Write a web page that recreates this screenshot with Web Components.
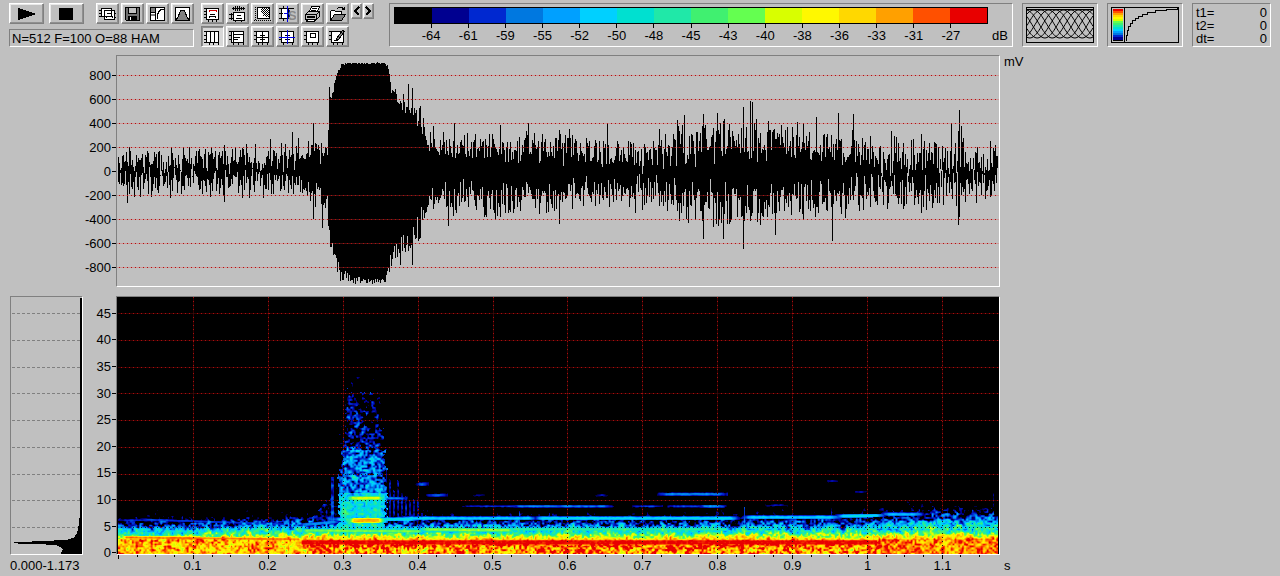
<!DOCTYPE html>
<html lang="en">
<head>
<meta charset="utf-8">
<title>Sound Analyzer</title>
<style>
    html, body {
        height: 100%;
        margin: 0;
    }
    body {
        background: #c0c0c0;
        color: #000;
        font: 13px/13px "Liberation Sans", Arial, sans-serif;
    }
</style>
</head>
<body>
<sound-analyzer></sound-analyzer>

<script>
// level colours, quiet to loud
const PALETTE = [
    [0, 0, 0], [0, 0, 144], [0, 40, 208], [0, 120, 224],
    [0, 160, 255], [0, 208, 255], [0, 224, 208], [32, 232, 168],
    [64, 240, 112], [100, 255, 80], [216, 255, 0], [255, 248, 0],
    [255, 216, 0], [255, 160, 0], [255, 80, 0], [232, 0, 0]
];

const DB = [-64, -61, -59, -55, -52, -50, -48, -45, -43, -40, -38, -36, -33, -31, -27];

const rgb = (c) => `rgb(${c.join(',')})`;

const ICONS = {
    play: '<path fill="#000" stroke="none" d="M0 2v12h2v-1h3v-1h3v-1h3v-1h3v-1h3v-2h-3v-1h-3v-1h-3v-1h-3v-1h-3v-1z"/>',
    stop: '<path fill="#000" stroke="none" d="M1 2h14v12h-14z"/>',
    copy: '<path fill="#fff" d="M2.500 2.500h10v8h-10zM5.500 4.500h10v9h-10z"/><path d="M0 4.500h3M0 7.500h3M0 10.500h3M8 7.500h5M7 11.500l1-1h5l1 1M15 7.500h2M15 11.500h2"/>',
    save: '<path fill="#707070" d="M1.500 1.500h14v13h-13l-1-1z"/><path fill="#c0c0c0" d="M4.500 1.500h8v6h-8z"/><path fill="#000" d="M4.500 10.500h8v4h-8z"/><path stroke="#fff" d="M6.500 11v3"/>',
    gamma: '<path fill="#fff" d="M1.500 1.500h14v13h-14z"/><path fill="#808080" stroke="none" d="M2 2h4v4h-4zM2 8h4v2h-4z"/><path d="M2 6.500h4M8.500 13v-4l1-3 2-2 3-1M6.500 1v13"/>',
    bell: '<path fill="#fff" d="M1.500 1.500h14v13h-14z"/><path fill="#808080" d="M2 14l2-3 2-5 1-2h3l1 2 2 5 2 3z"/>',
    head: '<path fill="#fff" d="M2.500 2.500h12v11h-12z"/><path stroke="#d00000" d="M5 5.500v-1h7v1"/><path d="M0 2.500h2M0 5.500h2M0 8.500h2M0 11.500h2M6 8.500h5M5 11.500l1-1h5l1 1M4.500 14v2M8.500 14v2M12.500 14v2"/>',
    wave: '<path d="M4.500 1v3M6.500 0v5M8.500 0v5M10.500 0v5M12.500 1v3M14.500 1v3M3 2.500h13"/><path fill="#fff" d="M4.500 6.500h11v8h-11z"/><path d="M8 9.500h4M7 12.500h6M0 8.500h4M2.500 7v7M0 12.500h4M6.500 15v1M12.500 15v1"/>',
    gray: '<path fill="#fff" d="M3.500 1.500h12v11h-12z"/><path stroke-dasharray="1 1" d="M8 2.500h7M7 3.500h8M8 4.500h7M7 5.500h8M8 6.500h7M9 7.500h6M10 8.500h5M9 9.500h6M12 10.500h3M1.500 1v14M0 14.500h17"/>',
    undo: '<path fill="#fff" d="M2.500 2.500h7v10h-7z"/><path d="M0 2.500h15M0 7.500h4M0 12.500h3M4 12.500h5M4.500 0v2M4.500 13v2"/><path stroke="#0000e0" d="M8.500 0v16M5 7.500h6M10 4v7"/><text x="9" y="14" font-size="13" font-weight="bold" fill="#888" stroke="none" font-family="Liberation Sans">S</text>',
    print: '<path fill="#fff" d="M5.500 5.500l2-5h8l-2 5"/><path fill="#c0c0c0" d="M1.500 8.500l3-3h11l-3 3zM1.500 8.500h11v5h-11zM12.500 8.500l3-3v5l-3 3z"/><path fill="#000" d="M3 10h7v1h-7z"/><path fill="#fff" d="M3.500 13.500h8l-1 2h-8zM8 2.500h5M7 4.500h5"/>',
    open: '<path fill="#fff" d="M1.500 14.500v-9l1-1h3l1 1h6v3"/><path fill="#808080" d="M1.500 14.500l4-6h11l-4 6z"/><path d="M8 2.500l2-1h3l2 2M15.500 1v3M13 3.500h3"/>',
    cols: '<path fill="#fff" d="M2.500 2.500h12v11h-12z"/><path d="M6.500 2v12M10.500 2v12M0 2.500h2M0 6.500h2M0 10.500h2M0 13.500h2M5.500 14v2M9.500 14v2M14.500 14v2"/>',
    rows: '<path fill="#fff" d="M2.500 2.500h12v11h-12z"/><path d="M5 5.500h9M5 8.500h6M5 10.500h4M4.500 2v12M0 2.500h2M0 6.500h2M0 10.500h2M4.500 14v2M9.500 14v2M14.500 14v2"/>',
    cross: '<path fill="#fff" d="M2.500 2.500h12v11h-12z"/><path d="M8.500 2v12M2 8.500h13M6 6.500h5M6 10.500h5M0 2.500h2M0 6.500h2M0 10.500h2M4.500 14v2M8.500 14v2M13.500 14v2"/>',
    crossBlue: '<path fill="#fff" d="M2.500 2.500h12v11h-12z"/><path d="M6 6.500h5M6 10.500h5M0 2.500h2M0 10.500h2M4.500 14v2M13.500 14v2"/><path stroke="#0000e0" d="M8.500 1v14M0 8.500h16"/>',
    box: '<path fill="#fff" d="M2.500 2.500h12v11h-12z"/><path d="M6.500 4.500h5v4h-5zM0 2.500h2M0 6.500h2M0 10.500h2M4.500 14v2M8.500 14v2M13.500 14v2"/>',
    edit: '<path fill="#fff" d="M2.500 2.500h12v11h-12z"/><path fill="#808080" d="M7.500 9.500l6-8 2 1-6 8-2 1z"/><path d="M0 2.500h2M0 6.500h2M0 10.500h2M5 11.500h3M4.500 14v2M8.500 14v2M13.500 14v2"/>',
    prev: '<path stroke-width="2" d="M11 4l-4 4 4 4"/>',
    next: '<path stroke-width="2" d="M6 4l4 4-4 4"/>'
};

// hashed lattice noise, same picture on every draw
function hash(x, y) {
    let h = Math.imul(x, 374761393) + Math.imul(y, 668265263);
    h = Math.imul(h ^ (h >>> 13), 1274126177);
    return ((h ^ (h >>> 16)) >>> 0) / 4294967296;
}

function noise(x, y) {
    const xi = Math.floor(x), yi = Math.floor(y);
    const fx = x - xi, fy = y - yi;
    const a = hash(xi, yi) * (1 - fx) + hash(xi + 1, yi) * fx;
    const b = hash(xi, yi + 1) * (1 - fx) + hash(xi + 1, yi + 1) * fx;
    return a * (1 - fy) + b * fy;
}

// linear interpolation in a table of [x, v1, v2, ...] rows
function lookup(table, x, col = 1) {
    if (x <= table[0][0]) return table[0][col];
    for (let i = 1; i < table.length; i++) {
        if (x <= table[i][0]) {
            const p = table[i - 1], q = table[i];
            return p[col] + (q[col] - p[col]) * (x - p[0]) / (q[0] - p[0]);
        }
    }
    return table[table.length - 1][col];
}

function render(el, html) {
    el.attachShadow({mode: 'open'}).innerHTML = html;
}


class ToolButton extends HTMLElement {
    constructor() {
        super();
        const icon = this.getAttribute('icon');
        const label = this.getAttribute('label');
        const pressed = this.hasAttribute('pressed');
        render(this, `
            <style>
                :host {
                    display: block;
                    height: 21px;
                }
                :host([small]) {
                    height: 16px;
                }
                button {
                    display: flex;
                    align-items: center;
                    justify-content: center;
                    box-sizing: border-box;
                    width: 100%;
                    height: 100%;
                    padding: 0;
                    overflow: hidden;
                    background: #c0c0c0;
                    border: 1px solid;
                    border-color: #fff #808080 #808080 #fff;
                    box-shadow: inset -1px -1px #909090, inset 1px 1px #e8e8e8;
                }
                button[aria-pressed="true"] {
                    background: #d8d8d8;
                    border-color: #808080 #fff #fff #808080;
                    box-shadow: inset 1px 1px #909090;
                }
                svg {
                    flex: none;
                }
            </style>
            <button type="button" aria-label="${label}" ${pressed ? 'aria-pressed="true"' : ''}>
                <svg width="17" height="16" viewBox="0 0 17 16" fill="none" stroke="#000" shape-rendering="crispEdges" aria-hidden="true">${ICONS[icon]}</svg>
            </button>
        `);
    }
}

// recessed box
class SunkenPanel extends HTMLElement {
    constructor() {
        super();
        render(this, `
            <style>
                :host {
                    display: block;
                    box-sizing: border-box;
                    min-width: 0;
                    min-height: 0;
                    overflow: hidden;
                    border: 1px solid;
                    border-color: #808080 #fff #fff #808080;
                }
            </style>
            <slot></slot>
        `);
    }
}

class ColorScale extends HTMLElement {
    constructor() {
        super();
        render(this, `
            <style>
                :host {
                    display: grid;
                    grid-template-columns: minmax(0, 1fr) 24px;
                    padding: 3px 0 0 4px;
                }
                .bar {
                    display: flex;
                    height: 15px;
                    border: 1px solid #000;
                }
                .bar i {
                    flex: 1;
                }
                .marks {
                    grid-row: 2;
                    display: grid;
                    grid-template-columns: 1fr repeat(15, 2fr) 1fr;
                    text-align: center;
                }
                .marks span:first-child {
                    grid-column-start: 2;
                }
                .marks span::before {
                    content: "";
                    display: block;
                    width: 1px;
                    height: 4px;
                    margin: 0 auto 1px;
                    background: #000;
                }
                .unit {
                    grid-row: 2;
                    padding-top: 5px;
                    text-align: center;
                }
            </style>
            <div class="bar">${PALETTE.map(c => `<i style="background:${rgb(c)}"></i>`).join('')}</div>
            <div class="marks">${DB.map(v => `<span>${v}</span>`).join('')}</div>
            <div class="unit">dB</div>
        `);
    }
}

// overlapping analysis windows
class WindowPreview extends HTMLElement {
    constructor() {
        super();
        let d = '';
        for (let s = 0; s < 7; s++) {
            for (let x = 1; x <= 67; x++) {
                const y = 17 - 14 * Math.cos((x - s * 7.5) * Math.PI / 26.25);
                d += (x === 1 ? 'M' : 'L') + x + ' ' + y.toFixed(1);
            }
        }
        render(this, `
            <style>
                :host {
                    display: flex;
                    padding: 3px;
                }
            </style>
            <svg width="68" height="36" viewBox="0 0 68 36" fill="none" stroke="#000" aria-hidden="true">
                <path shape-rendering="crispEdges" d="M.5.5h67v35h-67zM1 2.500h66"/>
                <path d="${d}"/>
            </svg>
        `);
    }
}

class GammaPreview extends HTMLElement {
    constructor() {
        super();
        const strip = PALETTE.slice(1).reverse().map((c, i) =>
            `<rect x="2" y="${2 + i * 2}" width="10" height="3" fill="${rgb(c)}" stroke="none"/>`).join('');
        render(this, `
            <style>
                :host {
                    display: flex;
                    padding: 3px;
                }
            </style>
            <svg width="68" height="36" viewBox="0 0 68 36" fill="none" stroke="#000" shape-rendering="crispEdges" aria-hidden="true">
                <path fill="#000" stroke="none" d="M2 30h10v4h-10z"/>
                ${strip}
                <path d="M.5.5h67v35h-67zM13.500 0v36"/>
                <path d="M15.500 34v-6h1v-5h1v-4h2v-3h2v-3h3v-2h3v-2h4v-2h5v-2h8v-2h11v-1h11v-1"/>
            </svg>
        `);
    }
}

class TimeReadout extends HTMLElement {
    constructor() {
        super();
        render(this, `
            <style>
                :host {
                    display: block;
                    padding: 2px 3px;
                }
                dl {
                    display: grid;
                    grid-template-columns: 1fr auto;
                    margin: 0;
                }
                dd {
                    margin: 0;
                }
            </style>
            <dl><dt>t1=</dt><dd>0</dd><dt>t2=</dt><dd>0</dd><dt>dt=</dt><dd>0</dd></dl>
        `);
    }
}

// vertical scale: from, to, step attributes, top to bottom
class YAxis extends HTMLElement {
    constructor() {
        super();
        const from = +this.getAttribute('from');
        const to = +this.getAttribute('to');
        const step = +this.getAttribute('step');
        let rows = '';
        for (let v = from; v >= to; v -= step) {
            rows += `<span>${v}</span>`;
        }
        render(this, `
            <style>
                :host {
                    display: flex;
                    flex-direction: column;
                    box-sizing: border-box;
                    min-height: 0;
                }
                span {
                    flex: 1;
                    display: flex;
                    align-items: center;
                    justify-content: flex-end;
                }
                span::after {
                    content: "";
                    width: 4px;
                    height: 1px;
                    margin-left: 1px;
                    background: #000;
                }
            </style>
            ${rows}
        `);
    }
}

// base of everything drawn on a canvas, redrawn when its box changes
class PlotCanvas extends HTMLElement {
    constructor() {
        super();
        render(this, `
            <style>
                :host {
                    display: block;
                    height: 100%;
                    contain: strict;
                }
                canvas {
                    display: block;
                    width: 100%;
                    height: 100%;
                }
            </style>
            <canvas></canvas>
        `);
        this.canvas = this.shadowRoot.querySelector('canvas');
    }

    connectedCallback() {
        this._observer = new ResizeObserver(() => this._redraw());
        this._observer.observe(this);
        this._redraw();
    }

    disconnectedCallback() {
        this._observer.disconnect();
    }

    _redraw() {
        const w = this.clientWidth, h = this.clientHeight;
        if (!w || !h) return;
        this.canvas.width = w;
        this.canvas.height = h;
        this.draw(this.canvas.getContext('2d'), w, h);
    }
}

class TimeTicks extends PlotCanvas {
    draw(ctx, w, h) {
        for (let i = 0; i <= 46; i++) {
            const x = Math.round((2 + i * 18.72) * w / 884);
            ctx.fillRect(x, 0, 1, i % 4 ? 2 : h);
        }
    }
}

class XAxis extends HTMLElement {
    constructor() {
        super();
        let cells = '';
        for (let i = 1; i <= 11; i++) {
            cells += `<span>${i / 10}</span>`;
        }
        render(this, `
            <style>
                :host {
                    display: block;
                }
                time-ticks {
                    height: 4px;
                }
                div {
                    display: grid;
                    grid-template-columns: 39fr repeat(11, 75fr) 20fr;
                    text-align: center;
                }
                span:first-child {
                    grid-column-start: 2;
                }
            </style>
            <time-ticks></time-ticks>
            <div>${cells}</div>
        `);
    }
}

// x, inner and outer reach above zero, inner and outer reach below zero
const ENVELOPE = [
    [0, -2, 16, 0, 16], [10, -6, 28, -6, 29], [140, -6, 28, -6, 31], [186, 0, 28, 0, 30],
    [192, 4, 38, 6, 44], [206, 4, 34, 6, 42], [210, 10, 40, 14, 52],
    [212, 56, 90, 50, 76], [218, 84, 106, 82, 100], [224, 104, 108, 92, 114], [234, 107, 109, 104, 114],
    [268, 107, 109, 106, 113], [270, 102, 108, 92, 112], [274, 76, 96, 76, 98], [282, 62, 84, 64, 90],
    [292, 48, 76, 52, 86], [302, 36, 68, 38, 74], [308, 22, 52, 22, 58], [314, 8, 42, 8, 50],
    [340, 6, 40, 4, 50], [440, 4, 42, 4, 50], [480, -2, 38, 2, 42], [540, -4, 36, -2, 40],
    [565, 0, 50, 2, 54], [620, 4, 58, 4, 60], [690, 4, 50, 4, 54], [730, 0, 46, 0, 48],
    [770, -10, 38, -6, 44], [840, -10, 38, -6, 42], [880, -10, 34, -10, 38]
];

// single peaks: x, above, below
const PEAKS = [
    [10, 0, 32], [107, 0, 31], [153, 32, 0], [175, 39, 0], [181, 33, 0], [196, 48, 48], [205, 0, 57],
    [283, 0, 94], [291, 87, 80], [295, 83, 94], [303, 65, 0], [316, 45, 0], [331, 0, 55], [337, 48, 0],
    [383, 46, 46], [411, 48, 0], [442, 0, 53], [452, 42, 0], [490, 47, 0], [518, 0, 42], [542, 42, 0],
    [560, 51, 40], [567, 56, 0], [586, 57, 68], [600, 58, 0], [606, 0, 68], [626, 64, 78], [633, 70, 50],
    [635, 69, 0], [658, 0, 64], [699, 54, 0], [715, 0, 70], [721, 58, 0], [736, 57, 0], [774, 40, 0],
    [804, 37, 42], [834, 48, 0], [841, 40, 54], [842, 61, 46], [844, 45, 0]
];

class WavePlot extends PlotCanvas {
    draw(ctx, w, h) {
        const zero = Math.round(h / 2);
        const scale = h / 230;
        ctx.fillStyle = '#000';
        for (let x = 1; x < w - 1; x++) {
            const t = x * 882 / w;
            const reach = (col, seed) => {
                const low = lookup(ENVELOPE, t, col);
                const high = lookup(ENVELOPE, t, col + 1);
                return low + (high - low) * (hash(x, seed) * 0.7 + hash(x, seed + 1) * 0.3);
            };
            const up = reach(1, 7) * scale;
            const down = reach(3, 19) * scale;
            ctx.fillRect(x, Math.round(zero - up), 1, Math.max(1, Math.round(up + down)));
        }
        PEAKS.forEach(([x, up, down]) => {
            ctx.fillRect(Math.round(x * w / 882), Math.round(zero - up * scale), 1, Math.round((up + down) * scale));
        });

        for (let mv = -800; mv <= 800; mv += 200) {
            if (mv === 0) continue;
            const y = Math.round(zero - mv * 0.12 * scale);
            ctx.fillStyle = 'rgba(232, 64, 64, 0.3)';
            ctx.fillRect(0, y, w, 1);
            ctx.fillStyle = '#b01010';
            for (let x = 2; x < w; x += 4) {
                ctx.fillRect(x, y, 1, 1);
            }
        }
    }
}

// height above 0 kHz, level, noise
const FLOOR = [
    [0, 13, 5], [3, 13, 6], [8, 14, 5], [13, 13.4, 4], [15, 11.5, 4], [18, 9.5, 5], [21, 6.8, 5],
    [25, 5, 5], [28, 2.8, 5], [32, 1, 5], [37, -0.8, 4], [42, -2, 4], [60, -4, 2]
];

// horizontal tones: x from, x to, height at both ends, level, thickness
const TONES = [
    [0, 190, 16, 14, 13.5, 0.8], [176, 768, 11, 11, 15, 2.4], [20, 200, 34, 28, 2.2, 0.8],
    [0, 60, 33, 33, 2, 0.8], [180, 225, 28, 32, 3.5, 1.2],
    [228, 270, 33, 33, 12.5, 1.7], [215, 300, 34, 34, 6, 0.9], [226, 270, 55, 55, 10, 1.2], [262, 290, 55, 55, 3, 0.8],
    [280, 420, 35, 35, 5, 0.9], [416, 622, 35, 35, 5.4, 0.9], [625, 724, 36, 36, 5, 0.9],
    [718, 768, 37, 38, 5.4, 0.9], [764, 806, 39, 39, 4.6, 0.9], [180, 310, 23, 22, 9, 0.9], [300, 400, 24, 23, 9.4, 1],
    [380, 615, 24, 24, 7.2, 1], [345, 404, 47, 47, 1.8, 0.7], [396, 496, 47, 47, 3.2, 0.7], [515, 545, 47, 47, 2, 0.7],
    [550, 590, 47, 47, 2.4, 0.7], [580, 609, 47, 47, 3.6, 0.8], [540, 610, 59, 59, 3.2, 1],
    [478, 490, 58, 58, 1.6, 0.8], [298, 311, 69, 69, 3.8, 1], [309, 330, 58, 58, 2.8, 1], [356, 367, 58, 58, 1.8, 0.8],
    [648, 670, 48, 48, 1.8, 0.8], [708, 722, 72, 72, 1.2, 1], [738, 750, 61, 61, 1.6, 1]
];

// short vertical marks: x, from height, to height, level, half width
const CLICKS = [
    [215, 20, 76, 2.8, 1.6], [402, 26, 42, 3, 1], [627, 26, 46, 3.4, 1], [714, 26, 54, 1, 1],
    [876, 46, 66, 1, 1], [432, 26, 40, 2, 1], [776, 30, 42, 2.6, 1], [526, 26, 36, 2.6, 1]
];

class SpectrogramPlot extends PlotCanvas {
    draw(ctx, w, h) {
        const img = ctx.createImageData(w, h);
        for (let y = 0; y < h; y++) {
            const height = (h - 1 - y) * 256 / h;
            for (let x = 0; x < w; x++) {
                const t = x * 882 / w;
                let c = [0, 0, 0];
                if (height < 185 && x > 0 && x < w - 1) {
                    c = this._color(this._level(t, height, x, y));
                }
                const i = (y * w + x) * 4;
                img.data[i] = c[0];
                img.data[i + 1] = c[1];
                img.data[i + 2] = c[2];
                img.data[i + 3] = 255;
            }
        }
        this._grid(img, w, h);
        ctx.putImageData(img, 0, 0);
    }

    _level(t, v, x, y) {
        const n = noise(x / 1.9, y / 1.9) * 0.75 + noise(x / 5 + 90, y / 4 + 40) * 0.45 - 0.6;
        const left = t < 190;
        const right = Math.max(0, Math.min(1, (t - 730) / 80));
        // the loud band reaches higher at the far end
        const s = v * (1 - right * 0.12 * (v > 24 ? 1.4 : 0.5)) + (left && v > 12 ? 2.5 * (190 - t) / 190 : 0);
        let level = lookup(FLOOR, s, 1) + n * lookup(FLOOR, s, 2) * 1.7;
        if (left && v < 14) level = 12.5 + n * 7;
        if (t > 764 && v < 14) level = 13.4 + n * 6;

        // burst, ragged at the sides and thinning out upwards
        const half = v < 90 ? 26 - v * 0.05 : 21.5 - (v - 90) * 0.06;
        const off = Math.abs(t - 245);
        if (v < 156 + n * 20 && v > 18 && off < half + n * 9) {
            const fade = off > half - 5 ? (off - half + 5) * 0.35 : 0;
            let b;
            if (v < 60) b = 6.2 - (v - 20) * 0.02 + n * 6;
            else if (v < 103) b = 3 + n * 8;
            else b = 0.9 - (v - 103) * 0.02 + n * 8;
            level = Math.max(level, b - fade);
        } else if (v >= 150 && v < 176 && off < 12) {
            level = Math.max(level, n * 6 - 1);
        }
        // onset
        if (t > 190 && t < 222 && v > 20 && v < 30 + (t - 190) * 1.2) {
            level = Math.max(level, 0.6 + n * 7 - (v - 30) * 0.03);
        }
        // stripes after the burst
        if (t > 268 && t < 310 && v > 24) {
            const top = 88 - (t - 268) * 0.8 - hash(Math.floor(t / 4), 5) * 22;
            if (v < top) {
                const stripe = Math.floor(t) % 4 < 2 ? 1.5 : -0.3;
                level = Math.max(level, stripe + n * 3 - v * 0.006);
            }
        }

        TONES.forEach(([from, to, a, b, tone, thick]) => {
            if (t < from || t > to) return;
            const d = Math.abs(v - a - (b - a) * (t - from) / (to - from));
            const edge = Math.min(1, (t - from + 3) / 12, (to - t + 3) / 12);
            if (d < thick + 1) {
                level = Math.max(level, (tone - Math.max(0, d - thick * 0.7) * 2.4) * edge + n * 1.6);
            }
        });
        CLICKS.forEach(([at, from, to, tone, wide]) => {
            if (v > from && v < to && Math.abs(t - at) < wide) {
                level = Math.max(level, tone * (1 - (v - from) / (to - from) * 0.5) + n * 3);
            }
        });
        return level;
    }

    _color(level) {
        if (level < 0.3) return PALETTE[0];
        const v = Math.min(14.999, level);
        const i = Math.floor(v), f = v - i;
        return PALETTE[i].map((c, k) => c + (PALETTE[i + 1][k] - c) * f);
    }

    _grid(img, w, h) {
        const dot = (x, y, on) => {
            const i = (y * w + x) * 4;
            const d = img.data;
            if (d[i] + d[i + 1] + d[i + 2] > 150) {
                if (on) d[i] = d[i + 1] = d[i + 2] = 30;
                return;
            }
            d[i] = on ? 168 : 56;
            d[i + 1] = on ? 16 : 0;
            d[i + 2] = on ? 16 : 0;
        };
        for (let f = 5; f <= 45; f += 5) {
            const y = Math.round(h - f * h / 48);
            for (let x = 1; x < w; x++) dot(x, y, x % 4 === 0);
        }
        for (let i = 1; i <= 11; i++) {
            const x = Math.round((1 + i * 74.9) * w / 882);
            for (let y = 0; y < h; y++) dot(x, y, y % 4 === 0);
        }
    }
}

// distance from the top, distance from the right edge
const SPECTRUM = [
    [219, 2], [222, 3], [227, 3], [231, 4], [236, 5], [240, 8], [242, 14], [243, 28], [244, 50],
    [245, 68], [246, 64], [247, 36], [248, 25], [250, 21], [252, 19], [254, 20], [256, 21]
];

class SpectrumPlot extends PlotCanvas {
    draw(ctx, w, h) {
        ctx.fillStyle = '#808080';
        for (let f = 5; f <= 45; f += 5) {
            const y = Math.round(h - f * h / 48);
            for (let x = 1; x < w; x += 5) {
                ctx.fillRect(x, y, 3, 1);
            }
        }
        ctx.fillStyle = '#000';
        for (let y = 1; y < h; y++) {
            const len = y * 257 / h < 219 ? 2 : Math.round(lookup(SPECTRUM, y * 257 / h));
            ctx.fillRect(w - len, y, len, 1);
        }
    }
}

class SoundAnalyzer extends HTMLElement {
    constructor() {
        super();
        render(this, `
            <style>
                :host {
                    display: flex;
                    flex-direction: column;
                    height: 100vh;
                }
                header {
                    display: flex;
                    align-items: flex-start;
                    gap: 9px;
                    padding: 3px 9px 8px;
                }
                .main-tools {
                    display: grid;
                    gap: 5px;
                    margin-right: -2px;
                }
                .row {
                    display: flex;
                    gap: 2px;
                }
                .row tool-button {
                    width: 23px;
                }
                .row .wide {
                    width: 35px;
                    margin-right: 3px;
                }
                .row .wide + .wide {
                    margin-right: 10px;
                }
                .status {
                    height: 18px;
                    padding: 2px;
                    white-space: nowrap;
                }
                .view-tools {
                    display: grid;
                    grid-template-columns: repeat(6, 23px);
                    gap: 2px;
                    margin-right: -7px;
                }
                .nav {
                    display: flex;
                    gap: 1px;
                    margin-right: 6px;
                }
                .nav tool-button {
                    width: 11px;
                }
                .box {
                    height: 44px;
                    width: 76px;
                }
                .box.scale {
                    flex: 1;
                }
                .box.times {
                    width: 79px;
                }
                main {
                    flex: 1;
                    min-height: 0;
                    display: grid;
                    grid-template-columns: 73px 33px minmax(0, 1fr) 280px;
                    grid-template-rows: minmax(150px, 232fr) 9px minmax(170px, 259fr) 21px;
                    padding-left: 10px;
                }
                .mv {
                    grid-area: 1 / 2;
                    padding: 8px 0;
                }
                .wave {
                    grid-area: 1 / 3;
                }
                .unit {
                    grid-area: 1 / 4;
                    padding-left: 4px;
                }
                .spectrum {
                    grid-area: 3 / 1;
                }
                .khz {
                    grid-area: 3 / 2 / 5 / 3;
                    padding: 4px 0 10px;
                }
                .spectrogram {
                    grid-area: 3 / 3;
                }
                .range {
                    grid-area: 4 / 1;
                    padding-top: 4px;
                    white-space: nowrap;
                }
                x-axis {
                    grid-area: 4 / 3;
                }
                .seconds {
                    grid-area: 4 / 4;
                    padding-top: 4px;
                }
            </style>
            <header>
                <div class="main-tools">
                    <div class="row">
                        <tool-button class="wide" icon="play" label="Play"></tool-button>
                        <tool-button class="wide" icon="stop" label="Stop"></tool-button>
                        <tool-button icon="copy" label="Copy"></tool-button>
                        <tool-button icon="save" label="Save"></tool-button>
                        <tool-button icon="gamma" label="Palette"></tool-button>
                        <tool-button icon="bell" label="Window"></tool-button>
                    </div>
                    <sunken-panel class="status">N=512 F=100 O=88 HAM</sunken-panel>
                </div>
                <div class="view-tools">
                    <tool-button icon="head" label="Title"></tool-button>
                    <tool-button icon="wave" label="Waveform"></tool-button>
                    <tool-button icon="gray" label="Grayscale"></tool-button>
                    <tool-button icon="undo" label="Cursor"></tool-button>
                    <tool-button icon="print" label="Print"></tool-button>
                    <tool-button icon="open" label="Open"></tool-button>
                    <tool-button icon="cols" label="Time cursors" pressed></tool-button>
                    <tool-button icon="rows" label="Frequency cursors"></tool-button>
                    <tool-button icon="cross" label="Cross cursor"></tool-button>
                    <tool-button icon="crossBlue" label="Free cursor"></tool-button>
                    <tool-button icon="box" label="Selection"></tool-button>
                    <tool-button icon="edit" label="Edit"></tool-button>
                </div>
                <div class="nav">
                    <tool-button small icon="prev" label="Previous"></tool-button>
                    <tool-button small icon="next" label="Next"></tool-button>
                </div>
                <sunken-panel class="box scale"><color-scale></color-scale></sunken-panel>
                <sunken-panel class="box"><window-preview></window-preview></sunken-panel>
                <sunken-panel class="box"><gamma-preview></gamma-preview></sunken-panel>
                <sunken-panel class="box times"><time-readout></time-readout></sunken-panel>
            </header>
            <main>
                <y-axis class="mv" from="800" to="-800" step="200"></y-axis>
                <sunken-panel class="wave"><wave-plot></wave-plot></sunken-panel>
                <div class="unit">mV</div>
                <sunken-panel class="spectrum"><spectrum-plot></spectrum-plot></sunken-panel>
                <y-axis class="khz" from="45" to="0" step="5"></y-axis>
                <sunken-panel class="spectrogram"><spectrogram-plot></spectrogram-plot></sunken-panel>
                <div class="range">0.000-1.173</div>
                <x-axis></x-axis>
                <div class="unit seconds">s</div>
            </main>
        `);
    }
}

customElements.define('tool-button', ToolButton);
customElements.define('sunken-panel', SunkenPanel);
customElements.define('color-scale', ColorScale);
customElements.define('window-preview', WindowPreview);
customElements.define('gamma-preview', GammaPreview);
customElements.define('time-readout', TimeReadout);
customElements.define('y-axis', YAxis);
customElements.define('time-ticks', TimeTicks);
customElements.define('x-axis', XAxis);
customElements.define('wave-plot', WavePlot);
customElements.define('spectrogram-plot', SpectrogramPlot);
customElements.define('spectrum-plot', SpectrumPlot);
customElements.define('sound-analyzer', SoundAnalyzer);
</script>
</body>
</html>
